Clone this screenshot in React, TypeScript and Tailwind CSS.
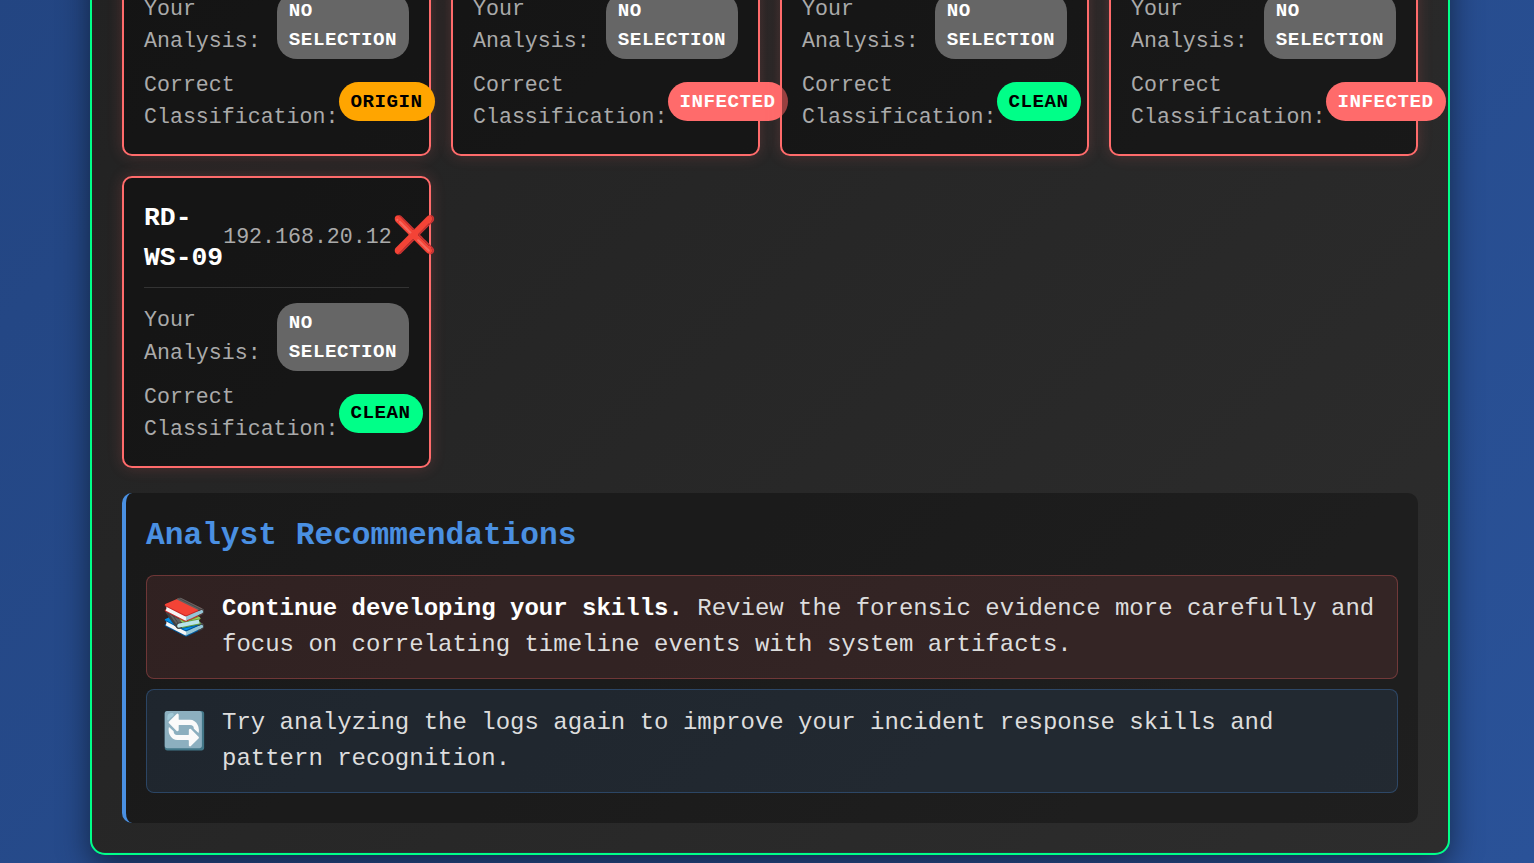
import type { ReactNode } from 'react';

type Verdict = 'none' | 'origin' | 'infected' | 'clean';

const badgeStyles: Record<Verdict, string> = {
  none: 'bg-[#666666] text-white pt-[5.5px] pb-[4.5px]',
  origin: 'bg-[#ffa500] text-black pt-[5.3px] pb-[4.7px]',
  infected: 'bg-[#ff6b6b] text-white pt-[5.3px] pb-[4.7px]',
  clean: 'bg-[#00ff88] text-black pt-[5.3px] pb-[4.7px]',
};

const badgeText: Record<Verdict, string> = {
  none: 'NO SELECTION',
  origin: 'ORIGIN',
  infected: 'INFECTED',
  clean: 'CLEAN',
};

function Badge({ verdict }: { verdict: Verdict }) {
  return (
    <span
      className={`rounded-[20px] px-3 text-[19.2px] leading-[28.8px] font-bold tracking-[0.5px] ${badgeStyles[verdict]}`}
    >
      {badgeText[verdict]}
    </span>
  );
}

function Row({ label, verdict }: { label: string; verdict: Verdict }) {
  return (
    <div className="flex items-center justify-between">
      <span className="-mt-[0.4px] mr-[0.15px] mb-[0.4px] text-[21.6px] leading-[32.4px] text-[#aaaaaa]">
        {label}
      </span>
      <Badge verdict={verdict} />
    </div>
  );
}

function ResultCard({ verdict, children }: { verdict: Verdict; children?: ReactNode }) {
  return (
    <article className="min-w-0 rounded-[10px] border-2 border-[#ff6b6b] bg-black/40 p-5 shadow-[0_0_15px_rgba(255,107,107,0.2)]">
      {children}
      <div className="flex flex-col gap-[10px]">
        <Row label="Your Analysis:" verdict="none" />
        <Row label="Correct Classification:" verdict={verdict} />
      </div>
    </article>
  );
}

function Recommendation({ icon, tone, children }: { icon: string; tone: string; children: ReactNode }) {
  return (
    <div className={`mb-[10px] flex items-start gap-[15px] rounded-lg border p-[15px] ${tone}`}>
      <span className="mt-[2px] shrink-0 text-[36px] leading-[54px]">{icon}</span>
      <p className="text-2xl leading-9 text-[#dddddd]">{children}</p>
    </div>
  );
}

const firstRow: Verdict[] = ['origin', 'infected', 'clean', 'infected'];

export default function App() {
  return (
    <div className="h-[863px] w-full overflow-hidden bg-[linear-gradient(135deg,#1e3c72_0%,#2a5298_100%)] bg-[length:100%_2600px] bg-bottom font-['Liberation_Mono',monospace]">
      <main className="-mt-[62.2px] ml-[90px] w-[1360px] rounded-[15px] border-2 border-[#00ff88] bg-[linear-gradient(135deg,#1a1a1a_0%,#2d2d2d_100%)] bg-[length:100%_2500px] bg-bottom p-[30px] pt-0 shadow-[0_10px_30px_rgba(0,0,0,0.5)]">
        <section className="mb-[25px] grid grid-cols-4 gap-5 pt-[30px]">
          {firstRow.map((verdict, i) => (
            <ResultCard key={i} verdict={verdict} />
          ))}
          <ResultCard verdict="clean">
            <header className="mb-[15px] flex items-center justify-between border-b border-[#333333] pb-[10px]">
              <span className="mt-[0.9px] -mb-[0.9px] text-[26.4px] leading-[39.6px] font-bold text-white">
                RD-<span className="whitespace-nowrap">WS-09</span>
              </span>
              <span className="-mt-[0.5px] mb-[0.5px] text-[21.6px] leading-[32.4px] text-[#aaaaaa]">192.168.20.12</span>
              <span className="text-[36px] leading-[54px]">❌</span>
            </header>
          </ResultCard>
        </section>

        <section className="rounded-[10px] border-l-4 border-[#4a90e2] bg-black/30 p-5">
          <h2 className="mb-[15px] text-[31.2px] leading-[46.8px] font-bold text-[#4a90e2]">
            Analyst Recommendations
          </h2>
          <Recommendation icon="📚" tone="border-[#ff6b6b]/30 bg-[#ff6b6b]/10">
            <strong className="font-bold text-white">Continue developing your skills.</strong> Review the
            forensic evidence more carefully and focus on correlating timeline events with system artifacts.
          </Recommendation>
          <Recommendation icon="🔄" tone="border-[#4a90e2]/30 bg-[#4a90e2]/10">
            Try analyzing the logs again to improve your incident response skills and pattern recognition.
          </Recommendation>
        </section>
      </main>
    </div>
  );
}
